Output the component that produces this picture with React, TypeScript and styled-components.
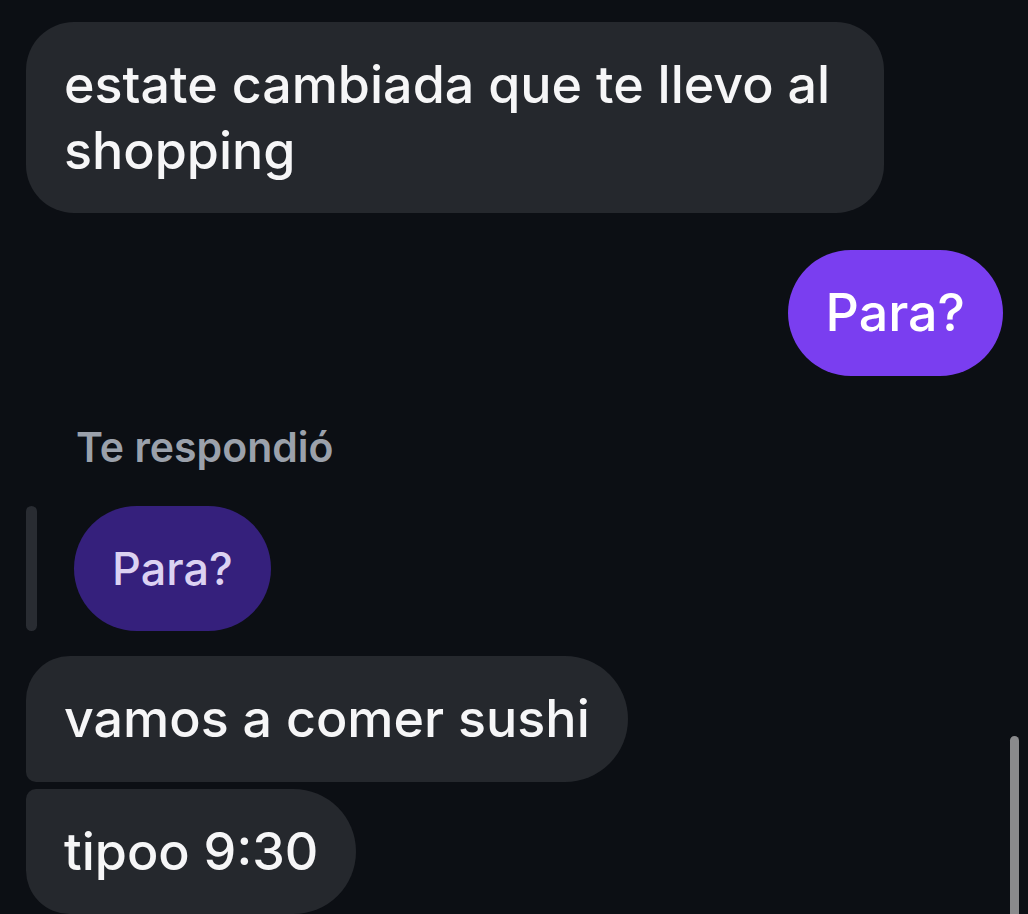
import React from "react";
import styled, { createGlobalStyle, css } from "styled-components";

const Global = createGlobalStyle`
  html, body { margin: 0; padding: 0; background: #0c0f14; }
  body { font-family: Inter, "Noto Sans", "Liberation Sans", sans-serif; }
`;

const Page = styled.div`
  position: relative;
  width: 1028px;
  height: 914px;
  overflow: hidden;
  background: #0c0f14;
  box-sizing: border-box;
  padding: 22px 25px 0 26px;
`;

const Thread = styled.div`
  display: flex;
  flex-direction: column;
`;

type Side = "in" | "out";

const Row = styled.div<{ $side: Side; $gap: number }>`
  display: flex;
  justify-content: ${(p) => (p.$side === "out" ? "flex-end" : "flex-start")};
  margin-top: ${(p) => p.$gap}px;
`;

const Bubble = styled.div<{
  $variant: "gray" | "purple" | "quote";
  $radius: string;
}>`
  box-sizing: border-box;
  max-width: 858px;
  padding: 30px 38px 30px;
  font-size: 52px;
  line-height: 65.5px;
  font-weight: 500;
  border-radius: ${(p) => p.$radius};
  ${(p) =>
    p.$variant === "gray" &&
    css`
      background: #25282d;
      color: #f6f6f7;
    `}
  ${(p) =>
    p.$variant === "purple" &&
    css`
      background: #7a3ef0;
      color: #ffffff;
    `}
  ${(p) =>
    p.$variant === "quote" &&
    css`
      background: #35207c;
      color: #dcd2f2;
      font-size: 45px;
    `}
`;

const ReplyLabel = styled.div`
  margin-top: 43px;
  padding-left: 50px;
  font-size: 41px;
  line-height: 56px;
  font-weight: 600;
  color: #9ba1ab;
`;

const ReplyRow = styled.div`
  display: flex;
  align-items: stretch;
  gap: 37px;
  margin-top: 31px;
`;

const ReplyBar = styled.div`
  width: 11px;
  border-radius: 6px;
  background: #292c32;
`;

const Scrollbar = styled.div`
  position: absolute;
  left: 1010px;
  top: 736px;
  width: 9px;
  bottom: 0;
  border-radius: 5px 5px 0 0;
  background: #8a8a8c;
`;

export default function App() {
  return (
    <>
      <Global />
      <Page>
        <Thread>
          <Row $side="in" $gap={0}>
            <Bubble $variant="gray" $radius="48px">
              estate cambiada que te llevo al shopping
            </Bubble>
          </Row>
          <Row $side="out" $gap={37}>
            <Bubble $variant="purple" $radius="63px">
              Para?
            </Bubble>
          </Row>
          <ReplyLabel>Te respondió</ReplyLabel>
          <ReplyRow>
            <ReplyBar />
            <Bubble $variant="quote" $radius="63px">
              Para?
            </Bubble>
          </ReplyRow>
          <Row $side="in" $gap={25}>
            <Bubble $variant="gray" $radius="44px 63px 63px 10px">
              vamos a comer sushi
            </Bubble>
          </Row>
          <Row $side="in" $gap={7}>
            <Bubble $variant="gray" $radius="10px 63px 63px 44px">
              tipoo 9:30
            </Bubble>
          </Row>
        </Thread>
        <Scrollbar />
      </Page>
    </>
  );
}
